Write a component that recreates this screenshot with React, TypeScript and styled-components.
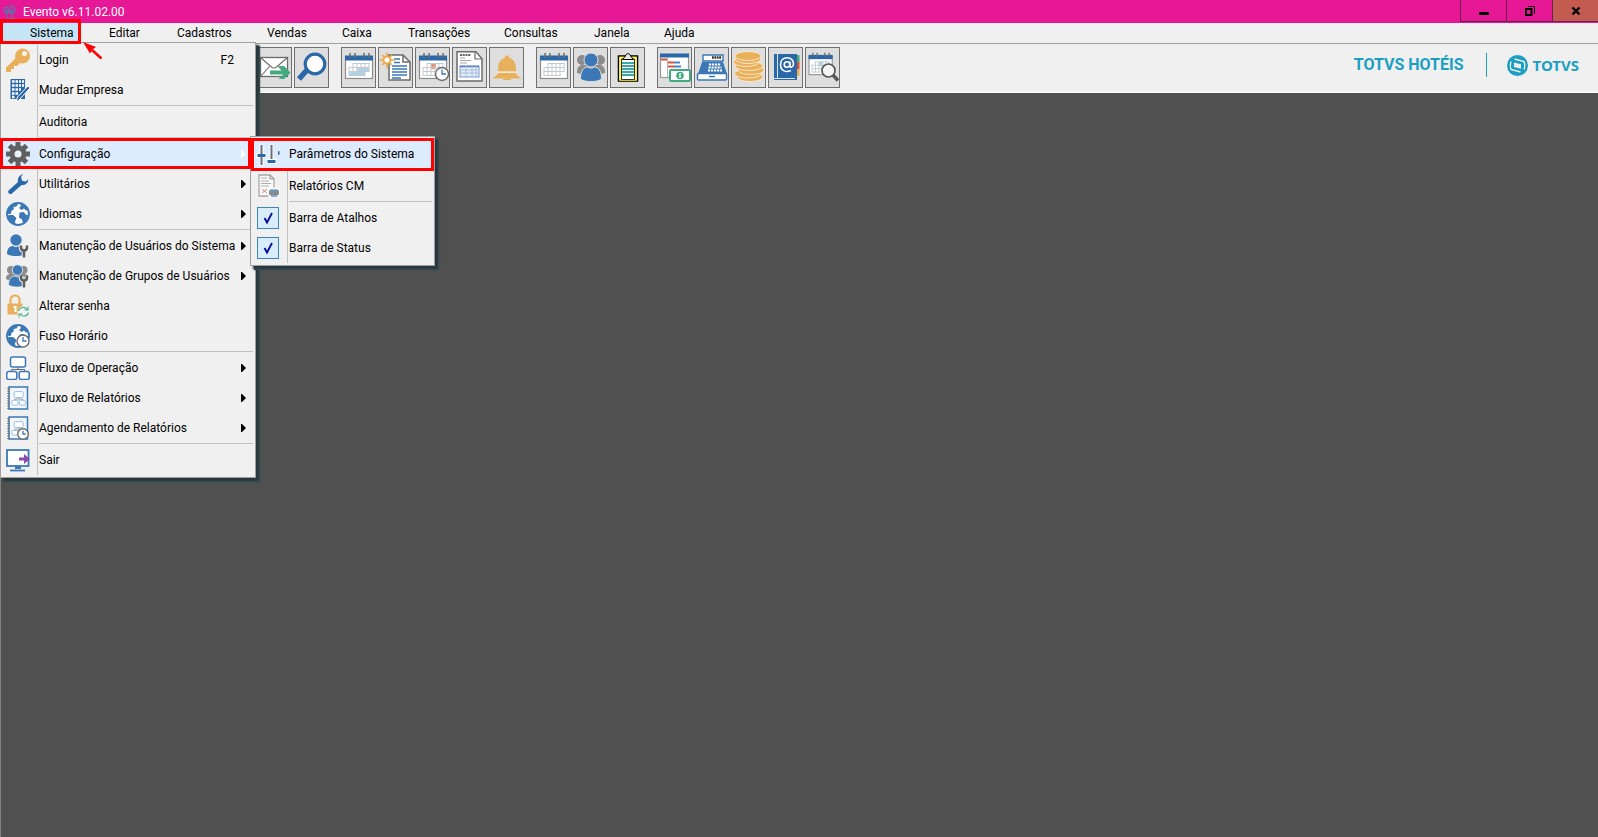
import React from "react";
import styled, { createGlobalStyle, css } from "styled-components";

const BLUE = "#3b78b5";
const NAVY = "#2a68a8";
const GREY = "#6b6b6b";
const AMBER = "#e9b05c";
const RED = "#ff0000";
const TEAL = "#1a9fc3";

const GlobalStyle = createGlobalStyle`
  *, *::before, *::after { box-sizing: border-box; }
  body {
    margin: 0;
    background: #505050;
    color: #000;
    font-family: "Roboto", "Open Sans", sans-serif;
    font-size: 12px;
    line-height: 16px;
  }
  button { font: inherit; color: inherit; margin: 0; padding: 0; border: 0; background: none; }
  svg { display: block; flex: none; }
`;

const Window = styled.div`
  display: flex;
  flex-direction: column;
  min-height: 100vh;
  overflow: hidden;
`;

const TitleBar = styled.header`
  display: flex;
  height: 23px;
  background: #e61896;
  color: #fff;
`;

const Title = styled.h1`
  display: flex;
  align-items: center;
  gap: 5px;
  flex: 1;
  margin: 0;
  padding-left: 2px;
  font-size: 12px;
  font-weight: 400;
`;

const WindowButton = styled.button<{ $close?: boolean }>`
  display: grid;
  place-items: center;
  width: 46px;
  height: 22px;
  border-left: 1px solid #6b2050;
  border-bottom: 1px solid #6b2050;
  background: ${(p) => (p.$close ? "#c45b50" : "transparent")};
`;

const MenuBar = styled.nav`
  position: relative;
  z-index: 2;
  display: grid;
  grid-template-columns: 90px 68px 90px 75px 66px 96px 90px 70px 70px;
  height: 21px;
  background: #f0f0f0;
  border-bottom: 1px solid #a0a0a0;
`;

const MenuSlot = styled.div`
  position: relative;
  display: flex;
`;

const MenuTitle = styled.button<{ $open?: boolean }>`
  flex: 1;
  padding-left: 19px;
  text-align: left;
  ${(p) =>
    p.$open &&
    css`
      margin-right: 10px;
      padding-left: 30px;
      background: #c3e5f6;
    `}
`;

const Highlight = styled.span<{ $inset: string }>`
  position: absolute;
  inset: ${(p) => p.$inset};
  z-index: 3;
  border: 3px solid ${RED};
  pointer-events: none;
`;

const Pointer = styled.svg`
  position: absolute;
  top: 18px;
  left: 82px;
  z-index: 3;
`;

const Panel = styled.div<{ $sub?: boolean }>`
  position: absolute;
  z-index: 2;
  top: ${(p) => (p.$sub ? "-3px" : "19px")};
  left: ${(p) => (p.$sub ? "249px" : "0")};
  width: ${(p) => (p.$sub ? "185px" : "256px")};
  padding: 2px 2px 2px 0;
  border: 1px solid #a0a0a0;
  background: linear-gradient(#c0c0c0, #c0c0c0) 36px 2px / 1px calc(100% - 4px) no-repeat #f0f0f0;
  box-shadow: 3px 3px 2px #27363d, 4px 4px 1px #40535a;
`;

const Row = styled.div<{ $active?: boolean }>`
  position: relative;
  height: 30px;
  background: ${(p) => (p.$active ? "#dcebfd" : "transparent")};
`;

const itemLayout = css`
  display: grid;
  grid-template-columns: 38px 1fr auto;
  align-items: center;
  width: 100%;
  height: 30px;
  text-align: left;
  white-space: nowrap;
`;

const Item = styled.button`
  ${itemLayout}
`;

const CheckItem = styled.label`
  ${itemLayout}
`;

const IconCell = styled.span`
  display: grid;
  place-items: center start;
  padding-left: 5px;

  ${CheckItem} & {
    padding-left: 6px;
  }
`;

const Shortcut = styled.span`
  padding-right: 19px;
`;

const Submark = styled.svg<{ $light?: boolean }>`
  margin-right: 7px;
  fill: ${(p) => (p.$light ? "#fff" : "#000")};
`;

const Separator = styled.hr`
  height: 1px;
  margin: 0 0 1px 38px;
  border: 0;
  background: #c0c0c0;
`;

const Check = styled.input`
  grid-area: 1 / 1;
  appearance: none;
  width: 22px;
  height: 22px;
  margin: 0;
  border: 1px solid #3c87c0;
  background: #d8ecfa;
`;

const Tick = styled.svg`
  grid-area: 1 / 1;
  z-index: 1;
  pointer-events: none;
`;

const ToolBar = styled.div`
  display: flex;
  align-items: center;
  gap: 12px;
  height: 49px;
  padding: 0 19px 2px 257px;
  background: #f0f0f0;
  border-bottom: 1px solid #fff;
  box-shadow: 0 2px 0 #808080;
`;

const ToolGroup = styled.div`
  display: flex;
  gap: 2px;
`;

const ToolButton = styled.button`
  display: grid;
  place-items: center;
  width: 35px;
  height: 41px;
  border: 1px solid #707070;
  background: #dedede;
`;

const Brand = styled.div`
  display: flex;
  align-items: center;
  margin-left: auto;
  padding-bottom: 4px;
  color: ${TEAL};
  font-weight: 700;
  white-space: nowrap;
`;

const Product = styled.span`
  padding-right: 22px;
  border-right: 1px solid ${TEAL};
  font-size: 16px;
  line-height: 24px;
`;

const Company = styled.span`
  display: flex;
  align-items: center;
  gap: 5px;
  padding-left: 20px;
  font-family: "Noto Sans", sans-serif;
  font-size: 15px;
  line-height: 24px;
`;

const Workspace = styled.main`
  flex: 1;
  border-left: 1px solid #808080;
  background: #505050;
`;

/* ---------- menu icons, 24 x 24 ---------- */

const Clock = ({ x, y, r }: { x: number; y: number; r: number }) => (
  <g>
    <circle cx={x} cy={y} r={r} fill="#fff" stroke={GREY} strokeWidth="1.4" />
    <path d={`M${x} ${y - r + 2}V${y}h${r - 2.5}`} fill="none" stroke={BLUE} strokeWidth="1.3" />
  </g>
);

const GlobeShape = () => (
  <g>
    <circle cx="12" cy="12" r="11" fill="#fff" stroke={BLUE} strokeWidth="1.8" />
    <path
      fill={BLUE}
      d="M1.500 9.500C2.500 5.500 5.500 2.500 9 1.500l3 .5-1.500 2.500-3 .5.5 2-2.500 2-.5 2.500-2.500 1zM3 13l4 0 3.500 3-1.500 3.500.5 3C5 21 2 18 1.500 14zM14 1.500c4 .5 7 3 8.500 6.500l-2.500.5-2-2-2.500 1.500-2.500-2 2-2zM13.500 10.500l4.500-.5 2 3 2.500-.5c-.5 4-2.500 7-5.500 9l-1-4-3-2z"
    />
  </g>
);

const WrenchSmall = () => (
  <g fill="none">
    <path d="M15 12v1.500q0 3 3 3t3-3V12M18 16.500V23" stroke="#f0f0f0" strokeWidth="4.500" />
    <path d="M15 11.500v2q0 3 3 3t3-3v-2M18 16.500V23.500" stroke="#5c5c5c" strokeWidth="2.500" />
  </g>
);

const FlowShape = ({ color = BLUE }: { color?: string }) => (
  <g fill="#fff" stroke={color} strokeWidth="1.5">
    <path d="M12 10v3M5.500 16v-2.500h13V16" fill="none" stroke={GREY} strokeWidth="1" />
    <rect x="4.500" y="1" width="15" height="10" rx="2" />
    <rect x=".8" y="15.500" width="10" height="8" rx="2" />
    <rect x="13.200" y="15.500" width="10" height="8" rx="2" />
  </g>
);

const Notebook = () => (
  <g>
    <rect x="3" y="1" width="18.500" height="22" fill="#f2f6fa" stroke={BLUE} strokeWidth="1.500" />
    <path d="M2.500 2v21" stroke={GREY} strokeWidth="2.500" strokeDasharray="1 1.500" />
    <g transform="translate(5.500 5) scale(.6)">
      <FlowShape color="#8db8df" />
    </g>
  </g>
);

const menuIcons: Record<string, React.ReactNode> = {
  key: (
    <g>
      <circle cx="16.500" cy="8" r="7.500" fill={AMBER} />
      <path d="M11 9 0 19.500V24h5v-3h3v-3h3l4-4z" fill={AMBER} />
      <circle cx="18.500" cy="5.500" r="2.500" fill="#f6f3ee" />
    </g>
  ),
  building: (
    <g>
      <rect x="4.500" y="1" width="14.500" height="20" fill={NAVY} />
      <path
        d="M6 3.500h2.500M9.500 3.500H12M13 3.500h2M16 3.500h2M6 7.500h2.500M9.500 7.500H12M13 7.500h2M16 7.500h2M6 11.500h2.500M9.500 11.500H12M13 11.500h2M6 15.500h2.500M9.500 15.500H12M6 19h2.500"
        stroke="#fff"
        strokeWidth="2.300"
      />
      <path d="m10 24 1.500-5L22 8l2 2-11 12z" fill={NAVY} stroke="#fff" />
    </g>
  ),
  gear: (
    <g>
      <g stroke="#606060" strokeWidth="5">
        <path d="M12 0v24M0 12h24M3.500 3.500l17 17M20.500 3.500l-17 17" />
      </g>
      <circle cx="12" cy="12" r="8.500" fill="#606060" />
      <circle cx="12" cy="12" r="3.500" fill="#eaf2fc" />
    </g>
  ),
  wrench: (
    <path
      d="M2 18.500 11.500 10c-.8-4 2-8 6.500-8.200L15.500 5l1 3.500 3.500.5 2.500-3c.8 4.500-2.500 8-7 7.500L6 22c-2.500 1.500-5-1-4-3.500z"
      fill={NAVY}
      stroke="#fff"
      strokeWidth=".8"
    />
  ),
  globe: <GlobeShape />,
  user: (
    <g>
      <circle cx="10" cy="6" r="5.700" fill={BLUE} />
      <path d="M1 20c0-6 3-8 6-8 2 1.500 4 1.500 6 0 4 0 6 3 6 8-3 2.500-14 3-18 0z" fill={BLUE} />
      <WrenchSmall />
    </g>
  ),
  group: (
    <g>
      <circle cx="5" cy="6" r="4" fill="#8b8b8b" />
      <circle cx="17.500" cy="6" r="4" fill="#8b8b8b" />
      <path d="M0 15c0-4 2-5 5-5h13c3 0 4 2 4 5l-4 2H4z" fill="#8b8b8b" />
      <circle cx="11.500" cy="6" r="5.200" fill={BLUE} stroke="#f0f0f0" strokeWidth=".8" />
      <path d="M2.500 21c0-6 3-9 6-9 2 1 4 1 6 0 3 0 5.500 4 5.500 9-4 2.500-13 3-17.500 0z" fill={BLUE} stroke="#f0f0f0" strokeWidth=".8" />
      <WrenchSmall />
    </g>
  ),
  lock: (
    <g>
      <path d="M4.500 10V6c0-6 9-6 9 0v4" fill="none" stroke={AMBER} strokeWidth="2.200" />
      <rect x="1.500" y="9.500" width="15" height="11" fill={AMBER} />
      <path d="M7.500 12h3v6h-2v-4h-1z" fill="#fff" />
      <circle cx="17.500" cy="18" r="6" fill="#f4f4f4" />
      <path d="M12.500 17c1-4 6-5 9-1.500M22.500 18.500c-1 4-6 5-9 1.500M22 12.500v3.500h-3.500M13 23.500V20h3.500" fill="none" stroke="#4db38a" strokeWidth="1.100" />
    </g>
  ),
  timezone: (
    <g>
      <GlobeShape />
      <Clock x={17} y={17} r={6} />
    </g>
  ),
  flow: <FlowShape />,
  notebook: <Notebook />,
  schedule: (
    <g>
      <Notebook />
      <Clock x={17} y={18} r={5.3} />
    </g>
  ),
  exit: (
    <g>
      <rect x="1" y="2" width="21.500" height="16" fill="#fff" stroke={BLUE} strokeWidth="1.800" />
      <path d="M9 18h6v3H9z" fill={BLUE} />
      <path d="M4 22.500h15" stroke={BLUE} strokeWidth="1.800" />
      <path d="M13 9.500h5V6l6 5-6 5v-3.500h-5z" fill="#8a4bab" />
    </g>
  ),
  sliders: (
    <g>
      <path d="M5.500 2.500V24M15.500 2.500V18" stroke="#fff" strokeWidth="4" />
      <path d="M.5 13.500h10M10.500 19.500h10" stroke="#fff" strokeWidth="5" />
      <path d="M5.500 3v20M15.500 3v14" stroke="#6a7076" strokeWidth="2" />
      <path d="M1.500 13.500h8M11.500 19.500h8" stroke={NAVY} strokeWidth="3" />
      <path d="M22 11h1.500" stroke={NAVY} strokeWidth="3.500" />
    </g>
  ),
  report: (
    <g>
      <path d="M3 1h11l4 4v17H3z" fill="#f8f8f8" stroke="#a8a8a8" strokeWidth="1.300" />
      <path d="M14 1v4h4" fill="none" stroke="#909090" />
      <path d="M5 4h6M5 7h8M5 9.500h10M5 12h8" stroke="#b0b0b0" />
      <path d="m6 15 5 4m0-4-5 4" stroke="#d49090" />
      <rect x="12" y="13.500" width="12" height="10" rx="3" fill="#fafafa" />
      <rect x="13" y="15.500" width="10" height="6" rx="2" fill="#8a8a8a" />
      <path d="M14 16.500h8M15 22h6" stroke="#5c9bd5" strokeWidth="1.500" />
    </g>
  ),
};

const MenuIcon = ({ name }: { name?: string }) =>
  name ? (
    <svg width="24" height="24" viewBox="0 0 24 24" aria-hidden="true">
      {menuIcons[name]}
    </svg>
  ) : null;

/* ---------- toolbar icons, 33 x 33 ---------- */

const Calendar = ({ fill, mark }: { fill?: string; mark?: string }) => (
  <g>
    <rect x="3.500" y="6" width="27" height="21.500" fill="#fff" stroke="#8c8c8c" strokeWidth="1.200" />
    <path d="M3 4.500h28v5H3z" fill={NAVY} />
    <path d="M8 2v5M13 2v5M22 2v5M27 2v5" stroke={GREY} strokeWidth="1.500" />
    {fill && <path d="M7 21h8v-4h12v4h-4v4H7z" fill={fill} />}
    {mark && <path d="M15 13h5v5h-5z" fill={mark} />}
    <path
      d="M11 12.500h16.500M7 16.500h20.500M7 20.500h20.500M7 24.500h16M7 16v9M11 12v13M15 12v13M19 12v13M23 12v13M27 12v9"
      stroke="#c3c9cf"
      strokeWidth="1"
      fill="none"
    />
  </g>
);

const toolIcons: Record<string, React.ReactNode> = {
  mail: (
    <g>
      <rect x="2.500" y="6.500" width="27" height="19" fill="#fff" stroke={GREY} strokeWidth="1.300" />
      <path d="m2.500 6.500 11 9.500q2.500 2 5 0l11-9.500M2.500 25.500l9-10M29.500 25.500l-9-10" fill="none" stroke={GREY} strokeWidth="1.100" />
      <path d="M12 19.500h13l-4.500-4.500h5.500l6.500 6.500-6.500 6.500h-5.500l4.500-4.500H12z" fill="#43aa7f" />
    </g>
  ),
  search: (
    <g>
      <path d="m12 19-8 9" stroke={NAVY} strokeWidth="5.500" />
      <circle cx="20" cy="13" r="9.800" fill="#fff" stroke={NAVY} strokeWidth="3.200" />
    </g>
  ),
  calendar: <Calendar fill="#a8d6f0" />,
  newDoc: (
    <g>
      <path d="M10 4h14l7 7v18H10z" fill="#fff" stroke={GREY} strokeWidth="1.500" />
      <path d="M24 4v7h7" fill="none" stroke={GREY} strokeWidth="1.500" />
      <path d="M15 8h6M15 11.500h6M13 15h15M13 18h15M13 21h15M13 24h15M13 27h9" stroke={BLUE} strokeWidth="1.400" />
      <circle cx="8" cy="9" r="3.500" fill="#fff" stroke="#eaa94b" strokeWidth="2" />
      <path d="M8 1.500v4M8 12.500v5M.5 9h4M11.500 9h4.500M3 4l2 2M13 4l-2 2M3 14l2-2M13 14l-2-2" stroke="#eaa94b" strokeWidth="1.600" />
    </g>
  ),
  calendarClock: (
    <g>
      <Calendar mark="#f08b6a" />
      <Clock x={26} y={23} r={6.5} />
    </g>
  ),
  invoice: (
    <g>
      <path d="M4 .8h19l6 7V30H4z" fill="#fff" stroke={GREY} strokeWidth="1.500" />
      <path d="M22 1v7h7" fill="none" stroke={GREY} strokeWidth="1.200" />
      <path d="M7 4h11" stroke="#333" strokeWidth="1.500" strokeDasharray="2 .7" />
      <path d="M7 7h5M7 9.500h11M7 12h7" stroke="#a5a5a5" />
      <rect x="7" y="15" width="19" height="11" fill="#e3edf8" stroke="#7a9ad0" />
      <path d="M7 15.500h19" stroke="#5a7cb8" strokeWidth="1.500" />
      <path d="M7 19h19M7 22h19M13 15v11M19 15v11M23 15v11" stroke="#a9bde0" />
    </g>
  ),
  bell: (
    <g fill={AMBER}>
      <circle cx="17" cy="7" r="2.500" />
      <path d="M8 20.500c0-9 2-13.500 9-13.500s9 4.500 9 13.500z" />
      <path d="M8 22h18q1 3 6 5.500H2q5-2.500 6-5.500z" />
      <path d="M7 21.200h20" stroke="#f4ead9" strokeWidth="1.200" />
      <path d="M13 27.500h8v1.500h-8z" />
    </g>
  ),
  calendarBlank: <Calendar />,
  people: (
    <g>
      <circle cx="8" cy="9" r="5" fill="#8b8b8b" />
      <circle cx="26" cy="9" r="5" fill="#8b8b8b" />
      <path d="M3 22c0-6 2-8 6-8h16c4 0 6 2 6 8l-4 1H7z" fill="#8b8b8b" />
      <circle cx="17" cy="9" r="7" fill={BLUE} stroke="#dedede" />
      <path d="M6.500 28c0-8 3-12 7-12 2 1.500 5 1.500 7 0 4 0 7 4 7 12-4 3.500-17 3.500-21 0z" fill={BLUE} stroke="#dedede" />
    </g>
  ),
  clipboard: (
    <g>
      <rect x="7.500" y="5" width="19" height="25" fill="#fff" stroke="#000" strokeWidth="1.500" />
      <path d="M9 29V6.500h16V29z" fill="#fff" stroke="#fff12a" strokeWidth="1.500" />
      <path d="M10.500 28.500V8h13v20.500z" fill="#fff" stroke="#000" strokeWidth=".8" />
      <path d="M11 12h12M11 15h12M11 18h12M11 21h12M11 24h12" stroke="#008c8c" strokeWidth="1.400" />
      <path d="M11.500 8.500 14.500 5c0-3 5-3 5 0l3 3.500z" fill="#e8e8e8" stroke="#000" />
    </g>
  ),
  gantt: (
    <g>
      <rect x="2.500" y="3.500" width="28" height="23" fill="#fff" stroke="#999" strokeWidth="1.200" />
      <path d="M2 2.500h29v4H2z" fill={NAVY} />
      <path d="M3 8.500h6M10 11.500h6M10 15.500h6" stroke="#d95136" strokeWidth="2" />
      <path d="M16 11.500h6M16 15.500h7" stroke="#4a83c2" strokeWidth="2" />
      <path d="M9.500 7v19" stroke="#b5b5b5" />
      <rect x="12" y="19" width="20" height="11" rx="1" fill="#fff" stroke="#43aa7f" strokeWidth="2" />
      <circle cx="22" cy="24.500" r="3.800" fill="#43aa7f" />
      <path d="M23.500 23h-2.200l1.500 3h-2.300M22 22v5" stroke="#fff" fill="none" strokeWidth=".8" />
    </g>
  ),
  register: (
    <g>
      <path d="M8 4h20v6H8z" fill="#fff" stroke={BLUE} strokeWidth="1.400" />
      <path d="M17 6.500h9" stroke="#333" strokeWidth="2.500" strokeDasharray="1.800 .6" />
      <path d="M7 11h21l4 12H3z" fill={BLUE} />
      <path d="M14 13.500h12M13.500 16.500h13M13 19.500h14" stroke="#fff" strokeWidth="2" strokeDasharray="2.200 .8" />
      <rect x="2.500" y="22.500" width="29" height="6.500" rx="1" fill="#fff" stroke={BLUE} strokeWidth="1.500" />
      <path d="M14 25.500h6" stroke={BLUE} strokeWidth="1.500" />
    </g>
  ),
  coins: (
    <g fill={AMBER} stroke="#fff1d8" strokeWidth=".8">
      <ellipse cx="18" cy="26" rx="13" ry="4.500" />
      <ellipse cx="16" cy="22.500" rx="13.500" ry="4.500" />
      <ellipse cx="19" cy="19" rx="13" ry="4.500" />
      <ellipse cx="17" cy="15" rx="14" ry="4.500" />
      <ellipse cx="14" cy="11" rx="12.500" ry="4.500" />
      <ellipse cx="16" cy="8" rx="13" ry="4.500" />
      <ellipse cx="16" cy="5" rx="13" ry="4.500" />
    </g>
  ),
  book: (
    <g>
      <path d="M27 4h3.500v7H27z" fill="#43aa7f" />
      <path d="M27 11h3.500v7H27z" fill="#d95136" />
      <path d="M27 18h3.500v7H27z" fill={AMBER} />
      <path d="M5 3h23v26H5z" fill={NAVY} />
      <path d="M8.500 3v24M5 27.500h21" stroke="#d8e6f4" strokeWidth="1" />
      <circle cx="18" cy="13.500" r="2.800" fill="none" stroke="#fff" strokeWidth="1.600" />
      <path d="M21 10.500v4.500c0 2 3.500 1.500 3.500-2 0-8.500-13-8.500-13 .5 0 7 6 8 10.500 6" fill="none" stroke="#fff" strokeWidth="1.600" />
    </g>
  ),
  calendarSearch: (
    <g>
      <g transform="scale(.86)">
        <Calendar mark="#a5d4ef" />
      </g>
      <path d="m26 23 6 6.500" stroke="#555" strokeWidth="3.500" />
      <circle cx="22.500" cy="19.500" r="6.500" fill="#f4f4f4" stroke="#555" strokeWidth="1.700" />
    </g>
  ),
};

const toolGroups: [string, string][][] = [
  [["mail", "Enviar e-mail"], ["search", "Pesquisar"]],
  [["calendar", "Calendário"], ["newDoc", "Novo documento"], ["calendarClock", "Agenda"], ["invoice", "Fatura"], ["bell", "Recepção"]],
  [["calendarBlank", "Mapa"], ["people", "Grupos"], ["clipboard", "Lista"]],
  [["gantt", "Previsão"], ["register", "Caixa"], ["coins", "Moedas"], ["book", "Contatos"], ["calendarSearch", "Consultar agenda"]],
];

type Entry = {
  label: string;
  icon?: string;
  shortcut?: string;
  submenu?: boolean;
  active?: boolean;
};

const sections: Entry[][] = [
  [
    { label: "Login", icon: "key", shortcut: "F2" },
    { label: "Mudar Empresa", icon: "building" },
  ],
  [{ label: "Auditoria" }],
  [
    { label: "Configuração", icon: "gear", submenu: true, active: true },
    { label: "Utilitários", icon: "wrench", submenu: true },
    { label: "Idiomas", icon: "globe", submenu: true },
  ],
  [
    { label: "Manutenção de Usuários do Sistema", icon: "user", submenu: true },
    { label: "Manutenção de Grupos de Usuários", icon: "group", submenu: true },
    { label: "Alterar senha", icon: "lock" },
    { label: "Fuso Horário", icon: "timezone" },
  ],
  [
    { label: "Fluxo de Operação", icon: "flow", submenu: true },
    { label: "Fluxo de Relatórios", icon: "notebook", submenu: true },
    { label: "Agendamento de Relatórios", icon: "schedule", submenu: true },
  ],
  [{ label: "Sair", icon: "exit" }],
];

const MenuEntry = ({ entry, children }: { entry: Entry; children?: React.ReactNode }) => (
  <Row $active={entry.active}>
    <Item type="button">
      <IconCell>
        <MenuIcon name={entry.icon} />
      </IconCell>
      {entry.label}
      {entry.shortcut && <Shortcut>{entry.shortcut}</Shortcut>}
      {entry.submenu && (
        <Submark $light={entry.active} width="5" height="8" viewBox="0 0 5 8" aria-hidden="true">
          <path d="M0 0h1l4 4-4 4H0z" />
        </Submark>
      )}
    </Item>
    {children}
  </Row>
);

const CheckEntry = ({ label }: { label: string }) => (
  <Row>
    <CheckItem>
      <IconCell>
        <Check type="checkbox" defaultChecked />
        <Tick width="22" height="22" viewBox="0 0 22 22" aria-hidden="true">
          <path d="m7.500 11 2.500 4.500L15 6" fill="none" stroke="#0a0a96" strokeWidth="1.800" />
        </Tick>
      </IconCell>
      {label}
    </CheckItem>
  </Row>
);

const ConfigMenu = () => (
  <Panel $sub>
    <MenuEntry entry={{ label: "Parâmetros do Sistema", icon: "sliders", active: true }}>
      <Highlight $inset="-1px -2px -2px 0" />
    </MenuEntry>
    <Separator />
    <MenuEntry entry={{ label: "Relatórios CM", icon: "report" }} />
    <Separator />
    <CheckEntry label="Barra de Atalhos" />
    <CheckEntry label="Barra de Status" />
  </Panel>
);

const SystemMenu = () => (
  <Panel>
    {sections.map((section, i) => (
      <React.Fragment key={i}>
        {i > 0 && <Separator />}
        {section.map((entry) => (
          <MenuEntry key={entry.label} entry={entry}>
            {entry.active && (
              <>
                <ConfigMenu />
                <Highlight $inset="-1px 2px 0 -1px" />
              </>
            )}
          </MenuEntry>
        ))}
      </React.Fragment>
    ))}
  </Panel>
);

export default function App() {
  return (
    <>
      <GlobalStyle />
      <Window>
        <TitleBar>
          <Title>
            <svg width="16" height="16" viewBox="0 0 16 16" fill="none" stroke="#7767a8" strokeWidth="1.300" aria-hidden="true">
              <path d="m2 4 4-1 1 5-2 2-3-2zM5 10l1 5M4 15.500l4-1M9 3l4 1-1 5-2 1-2-2zM10 10v5M8 15h5M7 1v1M10 0v2" />
              <path d="m3 6 3-1 .5 3L5 9zM9 6l3 0-1 3H9z" fill="#4c76b0" stroke="none" />
            </svg>
            Evento v6.11.02.00
          </Title>
          <WindowButton type="button" aria-label="Minimizar">
            <svg width="12" height="12" viewBox="0 0 12 12">
              <path d="M1 7h10v3H1z" />
            </svg>
          </WindowButton>
          <WindowButton type="button" aria-label="Restaurar">
            <svg width="10" height="10" viewBox="0 0 10 10" fill="none" stroke="#000">
              <path d="M1 3h5.500v6H1z" strokeWidth="2" />
              <path d="M3 .5h6.500V8" />
            </svg>
          </WindowButton>
          <WindowButton type="button" $close aria-label="Fechar">
            <svg width="10" height="10" viewBox="0 0 10 10" stroke="#000" strokeWidth="2.400">
              <path d="m1.500 1.500 7 7m0-7-7 7" />
            </svg>
          </WindowButton>
        </TitleBar>

        <MenuBar aria-label="Menu principal">
          <MenuSlot>
            <MenuTitle type="button" $open>
              Sistema
            </MenuTitle>
            <SystemMenu />
            <Highlight $inset="-4px 9px -1px 0" />
            <Pointer width="22" height="20" viewBox="0 0 22 20" aria-hidden="true">
              <path d="m10 9 9.500 8.500" stroke={RED} strokeWidth="2.500" />
              <path d="m1 1 13 5-3.500 2.500L8 12.500z" fill={RED} />
            </Pointer>
          </MenuSlot>
          {["Editar", "Cadastros", "Vendas", "Caixa", "Transações", "Consultas", "Janela", "Ajuda"].map((label) => (
            <MenuTitle key={label} type="button">
              {label}
            </MenuTitle>
          ))}
        </MenuBar>

        <ToolBar>
          {toolGroups.map((group, i) => (
            <ToolGroup key={i}>
              {group.map(([icon, label]) => (
                <ToolButton key={icon} type="button" aria-label={label}>
                  <svg width="33" height="33" viewBox="0 0 33 33" aria-hidden="true">
                    {toolIcons[icon]}
                  </svg>
                </ToolButton>
              ))}
            </ToolGroup>
          ))}
          <Brand>
            <Product>TOTVS HOTÉIS</Product>
            <Company>
              <svg width="21" height="21" viewBox="0 0 21 21" fill="none" aria-hidden="true">
                <circle cx="10.500" cy="10.500" r="10.500" fill={TEAL} />
                <g stroke="#f0f0f0" strokeWidth="1.400">
                  <path d="M7.500 4 17 6.500q1.500 4 0 8" />
                  <path d="M13.500 17 4 14.500q-1.500-4 0-8" />
                </g>
                <path d="m7 7.500 7 1.800v4.400L7 12z" fill="#f0f0f0" />
              </svg>
              TOTVS
            </Company>
          </Brand>
        </ToolBar>

        <Workspace />
      </Window>
    </>
  );
}
